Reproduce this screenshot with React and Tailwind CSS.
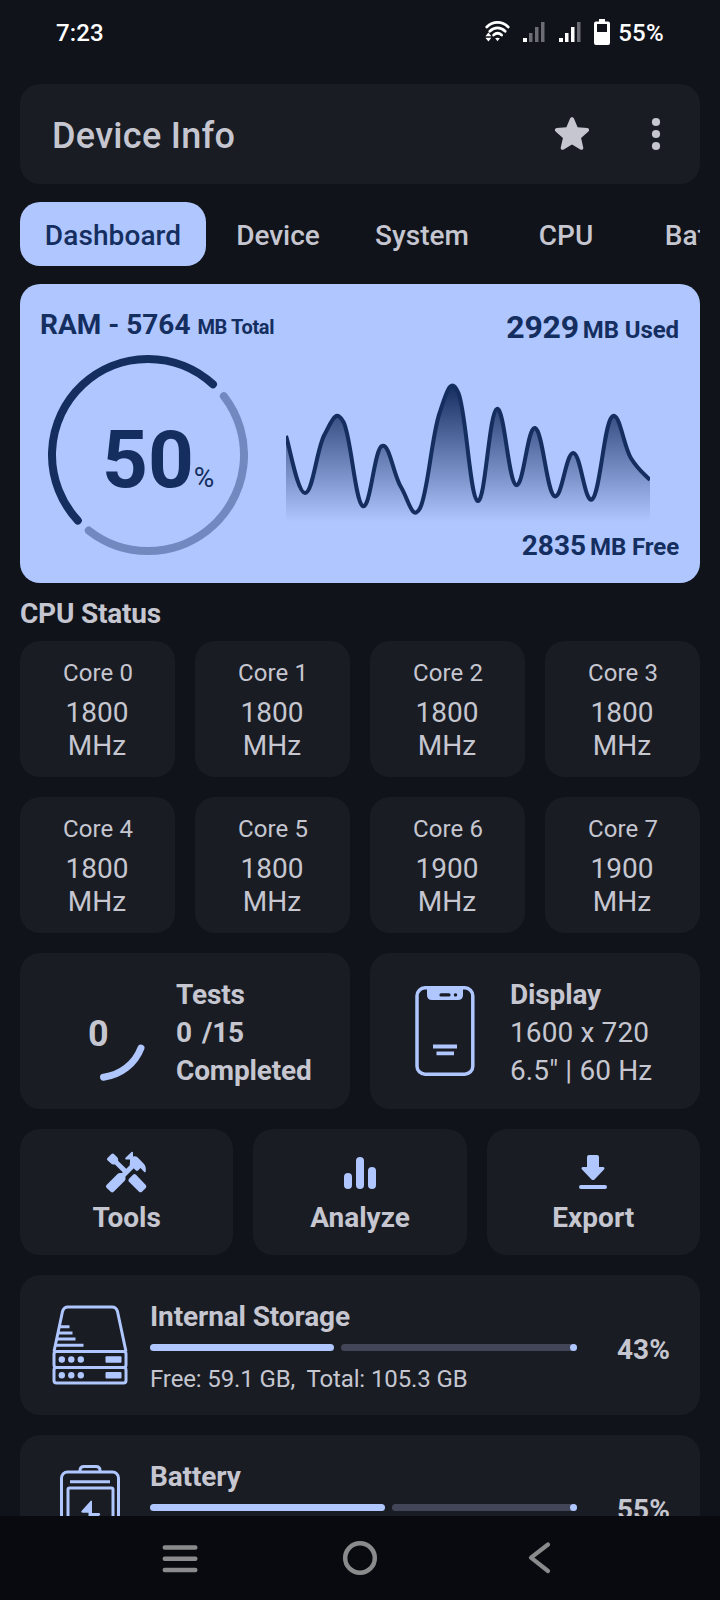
const TABS = ['Dashboard', 'Device', 'System', 'CPU', 'Battery'];

const CORES = [1800, 1800, 1800, 1800, 1800, 1800, 1900, 1900];

// RAM history, as y offsets inside the 364x142 chart
const HISTORY = [56, 113, 55, 42, 126, 66, 107, 128, 34, 13, 121, 29, 105, 48, 116, 73, 119, 37, 78, 100];

function smoothPath(values, width) {
  const step = width / (values.length - 1);
  const pts = values.map((y, i) => [i * step, y]);
  const at = (i) => pts[Math.max(0, Math.min(pts.length - 1, i))];
  let d = `M${pts[0][0]} ${pts[0][1]}`;
  for (let i = 1; i < pts.length; i++) {
    const [ax, ay] = at(i - 2);
    const [bx, by] = at(i - 1);
    const [cx, cy] = at(i);
    const [dx, dy] = at(i + 1);
    d += ` C${bx + (cx - ax) * 0.2} ${by + (cy - ay) * 0.2} ${cx - (dx - bx) * 0.2} ${cy - (dy - by) * 0.2} ${cx} ${cy}`;
  }
  return d;
}

function Signal({ level }) {
  return (
    <svg width="22" height="20" viewBox="0 0 22 20">
      {[4, 9, 15, 20].map((h, i) => (
        <rect key={h} x={i * 6} y={20 - h} width={i === 0 ? 4 : 3.5} height={h} fill={i < level ? '#ffffff' : '#6c6d72'} />
      ))}
    </svg>
  );
}

function StatusBar() {
  return (
    <div className="flex h-[84px] shrink-0 items-start justify-between pt-[19px] pr-[56px] pl-[56px] text-[24px] leading-7 font-medium text-white">
      <span className="tracking-[0.1px]">7:23</span>
      <div className="flex items-start">
        <svg className="mt-[2px] mr-[13px]" width="25" height="21" viewBox="0 0 25 21" fill="none" stroke="#fff" strokeWidth="2.8" strokeLinecap="round">
          <path d="M1.800 6C8-.1 17-.1 23.200 6" />
          <path d="M4.800 10.200c4.600-4.400 10.800-4.400 15.400 0" />
          <path d="M8.600 14c2.600-2.200 5.400-2.200 8 0" />
          <path d="M12.500 20.300l-2.300-3q2.300-1.200 4.600 0z" fill="#fff" stroke="none" />
          <path d="M3.400 11.500l3 3.800h-6zM3.400 20.600l3-3.800h-6z" fill="#fff" stroke="none" />
        </svg>
        <div className="mt-[3px] mr-[14px]"><Signal level={1} /></div>
        <div className="mt-[3px] mr-[13px]"><Signal level={3} /></div>
        <svg className="mr-[8px]" width="16" height="26" viewBox="0 0 16 26" fill="#fff">
          <path fillRule="evenodd" d="M5 0h6v2.500h3a2 2 0 0 1 2 2V24a2 2 0 0 1-2 2H2a2 2 0 0 1-2-2V4.500a2 2 0 0 1 2-2h3zM3 5v8h10V5z" />
        </svg>
        <span className="tracking-[0.3px]">55%</span>
      </div>
    </div>
  );
}

function Header() {
  return (
    <header className="flex h-[100px] shrink-0 items-center justify-between rounded-[20px] bg-[#191c23] pr-[32px] pl-[32px]">
      <h1 className="pt-1 text-[36px] font-medium tracking-[0.3px]">Device Info</h1>
      <div className="flex items-center gap-[54px]">
        <svg width="36" height="36" viewBox="3 3 18 18" fill="currentColor">
          <path d="M12 17.270l4.150 2.510c.76.46 1.690-.22 1.490-1.080l-1.100-4.720 3.670-3.180c.67-.58.31-1.680-.57-1.750l-4.830-.41-1.890-4.460c-.34-.81-1.500-.81-1.840 0L9.190 8.630l-4.830.41c-.88.07-1.240 1.170-.57 1.750l3.670 3.180-1.100 4.720c-.2.86.73 1.540 1.490 1.080l4.150-2.500z" />
        </svg>
        <svg width="24" height="34" viewBox="0 0 24 34" fill="currentColor">
          <circle cx="12" cy="5" r="4.100" />
          <circle cx="12" cy="17" r="4.100" />
          <circle cx="12" cy="29" r="4.100" />
        </svg>
      </div>
    </header>
  );
}

function Tabs() {
  return (
    <nav className="mt-[18px] flex h-16 shrink-0 overflow-hidden text-[28px] font-medium">
      {TABS.map((tab, i) => (
        <div
          key={tab}
          className={
            i === 0
              ? 'flex w-[186px] shrink-0 items-center justify-center rounded-[20px] bg-[#afc6ff] pt-1 tracking-[0.1px] text-[#152e60]'
              : 'flex min-w-[144px] shrink-0 items-center justify-center px-6 pt-1'
          }
        >
          {tab}
        </div>
      ))}
    </nav>
  );
}

function RamCard() {
  const line = smoothPath(HISTORY, 364);
  return (
    <section className="mt-[18px] flex h-[299px] shrink-0 justify-between rounded-[20px] bg-[#afc6ff] pt-6 pr-[21px] pl-5 font-bold text-[#152e60]">
      <div className="flex flex-col">
        <div className="text-[28px] leading-[33px] whitespace-nowrap">
          RAM - 5764 <span className="text-[20px] leading-none tracking-[-0.35px]">MB Total</span>
        </div>
        <div className="mt-[14px] ml-2 grid size-[200px]">
          <svg className="col-start-1 row-start-1" width="200" height="200" viewBox="0 0 200 200" fill="none" strokeWidth="8" strokeLinecap="round">
            <circle cx="100" cy="100" r="96" pathLength="360" strokeDasharray="175.500 184.500" transform="rotate(137 100 100)" stroke="#152e60" />
            <circle cx="100" cy="100" r="96" pathLength="360" strokeDasharray="165.800 194.200" transform="rotate(-37.800 100 100)" stroke="#7289c0" />
          </svg>
          <div className="col-start-1 row-start-1 flex items-baseline pt-[65px] pl-[54px]">
            <span className="text-[80px] leading-[80px]">50</span>
            <span className="text-[28px] leading-none font-normal">%</span>
          </div>
        </div>
      </div>
      <div className="flex flex-col items-end">
        <div className="text-[32px] leading-[38px] tracking-[-0.25px]">
          2929<span className="ml-1 text-[24px] leading-none tracking-[-0.1px]">MB Used</span>
        </div>
        <svg className="mt-[34px] mr-[29px] overflow-hidden" width="364" height="142" viewBox="0 0 364 142">
          <defs>
            <linearGradient id="ram" x1="0" y1="0" x2="0" y2="1">
              <stop offset="0" stopColor="#152e60" />
              <stop offset="1" stopColor="#152e60" stopOpacity="0" />
            </linearGradient>
          </defs>
          <path d={`${line} L364 142 L0 142 Z`} fill="url(#ram)" />
          <path d={line} fill="none" stroke="#152e60" strokeWidth="4" />
        </svg>
        <div className="mt-[7px] text-[28px] leading-[33px]">
          2835<span className="ml-1 text-[24px] leading-none tracking-[-0.1px]">MB Free</span>
        </div>
      </div>
    </section>
  );
}

function CpuStatus() {
  return (
    <section className="shrink-0">
      <h2 className="mt-[14px] text-[28px] leading-[33px] font-bold tracking-[-0.2px]">CPU Status</h2>
      <div className="mt-[11px] grid grid-cols-4 gap-5">
        {CORES.map((mhz, i) => (
          <div key={i} className="h-[136px] rounded-[20px] bg-[#191c23] pt-[18px] text-center">
            <div className="pl-px text-[24px] leading-7 tracking-[0.1px]">Core {i}</div>
            <div className="mt-[9px] pr-px text-[28px] leading-[33px]">
              {mhz}
              <br />
              MHz
            </div>
          </div>
        ))}
      </div>
    </section>
  );
}

function TestsAndDisplay() {
  return (
    <div className="mt-5 grid shrink-0 grid-cols-2 gap-5 text-[28px] leading-[38px]">
      <div className="flex h-[156px] rounded-[20px] bg-[#191c23] pt-[23px] pl-7 font-bold">
        <div className="mt-[5px] grid size-[100px]">
          <svg className="col-start-1 row-start-1" width="100" height="100" viewBox="0 0 100 100">
            <path d="M93 67A46 46 0 0 1 55.500 96.200" fill="none" stroke="#afc6ff" strokeWidth="7" strokeLinecap="round" />
          </svg>
          <span className="col-start-1 row-start-1 self-start pt-[32px] pl-[40px] text-[36px] leading-[42px]">0</span>
        </div>
        <div className="ml-[28px] tracking-[-0.15px]">
          Tests
          <br />
          0<span className="ml-[10px]">/15</span>
          <br />
          Completed
        </div>
      </div>
      <div className="flex h-[156px] rounded-[20px] bg-[#191c23] pt-[23px] pl-[45px]">
        <svg className="mt-[10px]" width="60" height="90" viewBox="0 0 60 90" fill="#afc6ff">
          <rect x="2" y="1.800" width="55.800" height="86.400" rx="8" fill="none" stroke="#afc6ff" strokeWidth="3.500" />
          <path fillRule="evenodd" d="M12 2h36v7q0 5-5 5H17q-5 0-5-5zM26 7.300a1.600 1.600 0 0 0 0 3.200h8a1.600 1.600 0 0 0 0-3.200zM40.500 7.200a1.700 1.700 0 1 0 .01 0z" />
          <path d="M18 58.500h24v4H18zM21.500 65.500h17.500v3.800H21.500z" />
        </svg>
        <div className="ml-[35px] tracking-[0.12px]">
          <b className="tracking-[-0.15px]">Display</b>
          <br />
          1600 x 720
          <br />
          6.5" | 60 Hz
        </div>
      </div>
    </div>
  );
}

function ToolsIcon() {
  return (
    <svg className="mr-[2px]" width="44" height="44" viewBox="0 0 44 44" fill="#afc6ff">
      {/* screwdriver */}
      <path d="M3.500 8L7.500 4q1.200-1 2.400 0L13 7q1.200 1.200 1.200 3v1L23 19.500l-3.500 3.500L11 14.500H9.500q-1.500 0-2.700-1.200L3.400 10.300q-1.100-1.100.1-2.300z" />
      <path d="M2.500 35L13.500 24q1-1 2.500-1h2L26.500 14.500l3.500 3.500-8.500 8.500v2q0 1.500-1 2.500L9.700 41.700q-1.500 1.500-3 0L2.500 37.700q-1.200-1.300 0-2.700z" />
      {/* hammer */}
      <path d="M21.500 7.800L27.500 2q1.500-1 1.500.8V6.500q2.800-.8 5 1.200L40 14q2.500 3 1.700 7.500-.3 1.500-1.500.4L36.500 18 34 20.500q-1 .8-2 0L26 15q-.8-1 0-2V9.500H22q-1.500-.3-.5-1.700z" />
      <path d="M25 28.700L29 24.700q1.500-1.200 3 0L41.800 35q1.200 1.500 0 3L38 41.700q-1.500 1.200-3 0L25 31.700q-1.400-1.500 0-3z" />
    </svg>
  );
}

function AnalyzeIcon() {
  return (
    <svg width="44" height="44" viewBox="0 0 44 44" fill="#afc6ff">
      <rect x="6" y="23" width="8" height="16" rx="4" />
      <rect x="18" y="7" width="8" height="32" rx="4" />
      <rect x="30" y="17" width="8" height="22" rx="4" />
    </svg>
  );
}

function ExportIcon() {
  return (
    <svg width="44" height="44" viewBox="0 0 44 44" fill="#afc6ff">
      <path d="M18 5h8q2 0 2 2v10h4q2.500.5 1 2.500L23.500 29.500q-1.500 1.200-3 0L11 19.500q-1.500-2 1-2.500h4V7q0-2 2-2z" />
      <rect x="8" y="35" width="28" height="4" rx="2" />
    </svg>
  );
}

function Actions() {
  const actions = [
    { label: 'Tools', icon: <ToolsIcon /> },
    { label: 'Analyze', icon: <AnalyzeIcon /> },
    { label: 'Export', icon: <ExportIcon /> },
  ];
  return (
    <div className="mt-5 grid shrink-0 grid-cols-3 gap-5">
      {actions.map(({ label, icon }) => (
        <button key={label} className="flex h-[126px] flex-col items-center rounded-[20px] bg-[#191c23] pt-[21px]">
          {icon}
          <span className="mt-[7px] text-[28px] leading-[33px] font-bold">{label}</span>
        </button>
      ))}
    </div>
  );
}

function StorageIcon() {
  return (
    <svg width="76" height="80" viewBox="0 0 76 80" fill="none" stroke="#afc6ff" strokeWidth="3">
      <path d="M2 46.500L10.500 6.500q1.200-4.500 5.500-4.500h44q4.300 0 5.500 4.500L74 46.500" />
      <rect x="2" y="46.500" width="72" height="16" rx="2.500" />
      <rect x="2" y="62.500" width="72" height="15.500" rx="2.500" />
      <path d="M7.500 21.700h10M6.500 28h14M5 34h18.500M4 40.300h27.500" />
      <g fill="#afc6ff" stroke="none">
        {[54.5, 70.3].map((cy) => (
          <g key={cy}>
            <circle cx="9.800" cy={cy} r="3.200" />
            <circle cx="19.300" cy={cy} r="3.200" />
            <circle cx="28.800" cy={cy} r="3.200" />
            <rect x="53.500" y={cy - 3.2} width="16" height="6.400" rx="1" />
          </g>
        ))}
      </g>
    </svg>
  );
}

function BatteryIcon() {
  return (
    <svg width="76" height="80" viewBox="0 0 76 80" fill="none" stroke="#afc6ff" strokeWidth="3">
      <path d="M28 7V5.500Q28 1.500 32 1.500h12q4 0 4 4V7" />
      <rect x="9.500" y="7" width="57" height="90" rx="6" />
      <path d="M18 16.700h40" />
      <rect x="16" y="23" width="45" height="60" rx="1.500" />
      <path d="M39 35.500L29.500 46q-.8 1.500 1 1.700h6V60L48 50q.6-1.700-1-2h-7V36z" fill="#afc6ff" stroke="none" />
    </svg>
  );
}

function UsageCard({ icon, title, percent, detail }) {
  return (
    <div className="mt-5 flex h-[140px] shrink-0 rounded-[20px] bg-[#191c23] pt-[25px] pl-[32px]">
      <div className="mt-[5px]">{icon}</div>
      <div className="ml-[22px] w-[427px]">
        <h3 className="text-[28px] leading-[33px] font-bold tracking-[-0.12px]">{title}</h3>
        <div className="mt-[11px] flex h-[7px] gap-[7px]">
          <div className="rounded-full bg-[#afc6ff]" style={{ width: `${percent}%` }} />
          <div className="flex flex-1 justify-end rounded-full bg-[#434659]">
            <div className="size-[7px] rounded-full bg-[#afc6ff]" />
          </div>
        </div>
        {detail && <p className="mt-[14px] text-[24px] leading-7 tracking-[-0.12px] whitespace-pre">{detail}</p>}
      </div>
      <div className="mt-[33px] ml-[40px] text-[28px] leading-[33px] font-bold">{percent}%</div>
    </div>
  );
}

function NavBar() {
  return (
    <div className="flex h-[84px] shrink-0 items-center justify-around bg-[#090a0f] px-[90px]">
      <svg width="36" height="36" viewBox="0 0 36 36" stroke="#8b8b8d" strokeWidth="4.500" strokeLinecap="round">
        <path d="M2.800 7.500h30.500M2.800 18.700h30.500M2.800 29.900h30.500" />
      </svg>
      <svg width="36" height="36" viewBox="0 0 36 36" fill="none" stroke="#8b8b8d" strokeWidth="4.500">
        <circle cx="18" cy="18" r="14.800" />
      </svg>
      <svg width="36" height="36" viewBox="0 0 36 36" fill="none" stroke="#8b8b8d" strokeWidth="4.200" strokeLinecap="round" strokeLinejoin="round">
        <path d="M26 4.500L9 17.700 26 31" />
      </svg>
    </div>
  );
}

export default function App() {
  return (
    <div className="flex h-[1600px] w-[720px] flex-col overflow-hidden bg-[#10131a] font-['Roboto',sans-serif] text-[#c5c6d0]">
      <StatusBar />
      <main className="flex min-h-0 flex-1 flex-col overflow-hidden px-5">
        <Header />
        <Tabs />
        <RamCard />
        <CpuStatus />
        <TestsAndDisplay />
        <Actions />
        <UsageCard icon={<StorageIcon />} title="Internal Storage" percent={43} detail="Free: 59.1 GB,  Total: 105.3 GB" />
        <UsageCard icon={<BatteryIcon />} title="Battery" percent={55} />
      </main>
      <NavBar />
    </div>
  );
}
